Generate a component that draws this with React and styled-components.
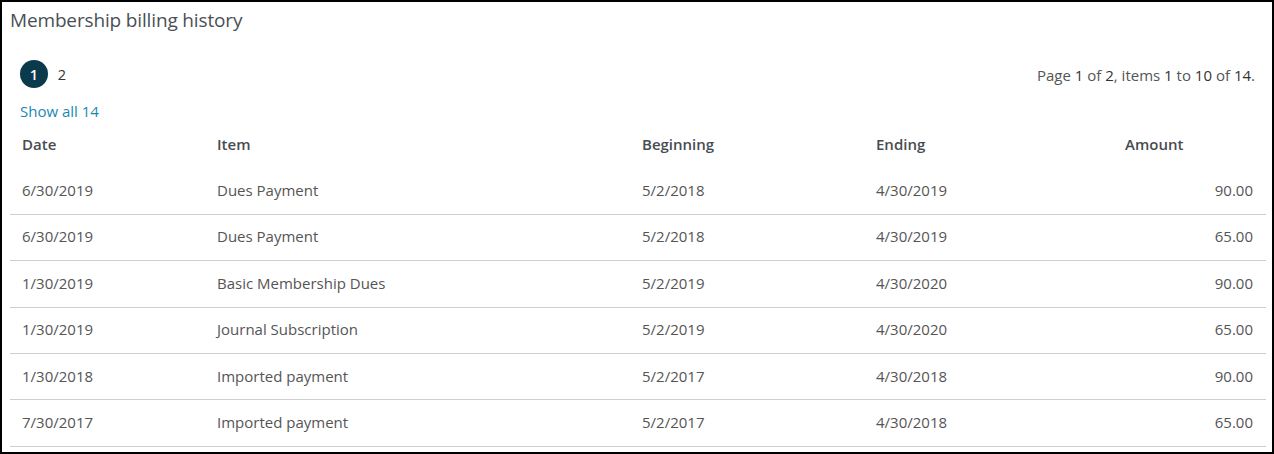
import React from "react";
import styled, { createGlobalStyle } from "styled-components";

const GlobalStyle = createGlobalStyle`
  body {
    margin: 0;
    background: #fff;
    font-family: "Open Sans", "Liberation Sans", sans-serif;
  }
`;

const Panel = styled.div`
  box-sizing: border-box;
  width: 1274px;
  height: 454px;
  border: 2px solid #000;
  padding: 6px 6px 0 8px;
  overflow: hidden;
  color: #555;
`;

const Title = styled.h2`
  margin: 0;
  font-size: 19px;
  line-height: 24px;
  font-weight: 400;
  color: #4a4f55;
  letter-spacing: -0.15px;
`;

const PagerRow = styled.div`
  display: flex;
  align-items: center;
  justify-content: space-between;
  margin-top: 28px;
  padding: 0 11px 0 10px;
  height: 28px;
`;

const Pages = styled.div`
  display: flex;
  align-items: center;
`;

const PageDot = styled.span`
  display: inline-flex;
  align-items: center;
  justify-content: center;
  width: 28px;
  height: 28px;
  border-radius: 50%;
  font-size: 14.5px;
  background: ${(p) => (p.$active ? "#0c3a4d" : "transparent")};
  color: ${(p) => (p.$active ? "#fff" : "#333")};
  font-weight: ${(p) => (p.$active ? 600 : 400)};
`;

const PageInfo = styled.div`
  font-size: 15px;
  color: #555;
  padding-top: 2px;

  b {
    font-weight: 400;
    color: #333;
  }
`;

const ShowAll = styled.a`
  display: block;
  margin: 13px 0 0 10px;
  font-size: 15px;
  line-height: 20px;
  color: #1889b5;
  text-decoration: none;
`;

const Row = styled.div`
  box-sizing: border-box;
  display: grid;
  grid-template-columns: 195px 425px 234px 249px 1fr;
  align-items: center;
  height: ${(p) => (p.$head ? "47.4px" : "46.4px")};
  padding-bottom: ${(p) => (p.$head ? "0" : "2px")};
  font-size: 15px;
  border-bottom: 1px solid ${(p) => (p.$head ? "transparent" : "#cfcfcf")};
  font-weight: ${(p) => (p.$head ? 600 : 400)};
  color: ${(p) => (p.$head ? "#474c52" : "#555")};
`;

const Cell = styled.div`
  padding: 0 13px 0 12px;
  text-align: ${(p) => (p.$right ? "right" : "left")};
  white-space: nowrap;
`;

const rows = [
  ["6/30/2019", "Dues Payment", "5/2/2018", "4/30/2019", "90.00"],
  ["6/30/2019", "Dues Payment", "5/2/2018", "4/30/2019", "65.00"],
  ["1/30/2019", "Basic Membership Dues", "5/2/2019", "4/30/2020", "90.00"],
  ["1/30/2019", "Journal Subscription", "5/2/2019", "4/30/2020", "65.00"],
  ["1/30/2018", "Imported payment", "5/2/2017", "4/30/2018", "90.00"],
  ["7/30/2017", "Imported payment", "5/2/2017", "4/30/2018", "65.00"],
];

export default function App() {
  return (
    <>
      <GlobalStyle />
      <Panel>
        <Title>Membership billing history</Title>
        <PagerRow>
          <Pages>
            <PageDot $active>1</PageDot>
            <PageDot>2</PageDot>
          </Pages>
          <PageInfo>
            Page <b>1</b> of <b>2</b>, items <b>1</b> to <b>10</b> of <b>14</b>.
          </PageInfo>
        </PagerRow>
        <ShowAll href="#">Show all 14</ShowAll>
        <Row $head>
          <Cell>Date</Cell>
          <Cell>Item</Cell>
          <Cell>Beginning</Cell>
          <Cell>Ending</Cell>
          <Cell>Amount</Cell>
        </Row>
        {rows.map((r, i) => (
          <Row key={i}>
            <Cell>{r[0]}</Cell>
            <Cell>{r[1]}</Cell>
            <Cell>{r[2]}</Cell>
            <Cell>{r[3]}</Cell>
            <Cell $right>{r[4]}</Cell>
          </Row>
        ))}
      </Panel>
    </>
  );
}
